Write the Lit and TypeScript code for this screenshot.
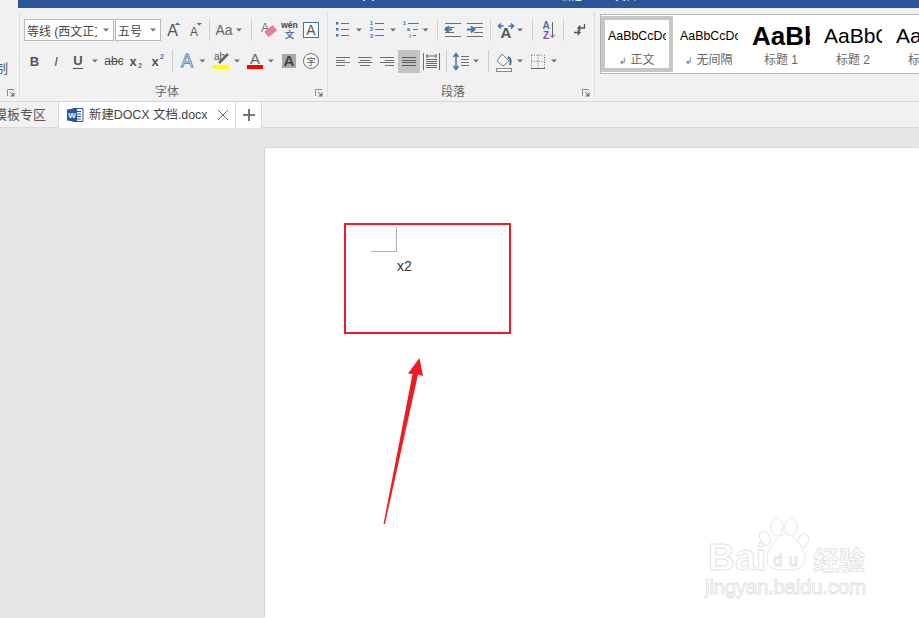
import { LitElement, html, css, svg } from "lit";
import { customElement } from "lit/decorators.js";

const SANS = `"Liberation Sans","Noto Sans CJK SC",sans-serif`;
const GR = "#555555";
const BL = "#3f74ad";

const ic = (w: number, h: number, c: unknown) =>
  html`<svg class="ic" width=${w} height=${h} viewBox="0 0 ${w} ${h}">${c}</svg>`;
const tri = (x: number, y = 11) =>
  svg`<polygon points="${x - 3},${y - 1.5} ${x + 3},${y - 1.5} ${x},${y + 1.5}" fill="#6f6f6f"/>`;
const t = (x: number, y: number, s: number, c: string, txt: string, extra = "", anchor = "middle") =>
  svg`<text x=${x} y=${y} font-size=${s} fill=${c} text-anchor=${anchor} font-weight=${extra.includes("b") ? "bold" : "normal"} font-style=${extra.includes("i") ? "italic" : "normal"} font-family=${SANS}>${txt}</text>`;
const hl = (x1: number, x2: number, y: number, c = "#6b6b6b", sw = 1) =>
  svg`<line x1=${x1} x2=${x2} y1=${y} y2=${y} stroke=${c} stroke-width=${sw}/>`;
const lines = (x: number, ws: number[], ys: number[], c = "#707070") =>
  ws.map((w, i) => hl(x, x + w, ys[i] + 0.5, c));

const launcher = html`<svg class="launch" width="8" height="8" viewBox="0 0 8 8">
  <path d="M.5 7V.5H7" fill="none" stroke="#8a8a8a"/><path d="M7.5 3v4.5H3z" fill="#777"/><path d="M3 3l3 3" stroke="#777"/>
</svg>`;

const Y = [4, 10, 16];
const fontRow1 = [
  { w: 24, c: ic(24, 22, svg`${t(11.5, 17, 16, "#555", "A")}<polygon points="13.5,6 19.5,6 16.5,3.5" fill=${BL}/>`) },
  { w: 24, c: ic(24, 22, svg`${t(9, 17, 12, "#555", "A")}<polygon points="11.5,4 17,4 14.2,6.5" fill=${BL}/>`) },
  { sep: 1 },
  { w: 41, c: ic(41, 22, svg`${t(14, 16, 14, "#666", "Aa")}${tri(29)}`) },
  { sep: 1 },
  { w: 27, c: ic(27, 22, svg`${t(13, 13, 12, "#777", "A")}<rect x="13" y="9" width="11" height="7" rx="1" fill="#e8808f" transform="rotate(-38 18 12)"/>`) },
  { w: 21, c: ic(21, 22, svg`${t(10.5, 9, 8.5, "#444", "wén", "b")}${t(10.5, 19, 9.5, BL, "文", "b")}`) },
  { w: 22, c: ic(22, 22, svg`<rect x="3.5" y="3.5" width="15" height="15" fill="#fbfbfb" stroke=${BL}/>${t(11, 16, 14, "#555", "A")}`) },
];
const fontRow2 = [
  { w: 21, c: ic(21, 23, t(10.5, 16, 13, GR, "B", "b")) },
  { w: 22, c: ic(22, 23, t(11, 16, 13, GR, "I", "i")) },
  { w: 37, c: ic(37, 23, svg`${t(11, 15, 13, GR, "U", "b")}${hl(6, 16, 18.5, GR)}${tri(28)}`) },
  { w: 20, c: ic(20, 23, svg`${t(10, 15, 12, GR, "abc")}${hl(1, 19, 11.5, GR)}`) },
  { w: 22, c: ic(22, 23, svg`${t(9, 16, 13, GR, "x", "b")}${t(16, 18, 7, BL, "2", "b")}`) },
  { w: 22, c: ic(22, 23, svg`${t(9, 16, 13, GR, "x", "b")}${t(16, 9, 7, BL, "2", "b")}`) },
  { w: 4 },
  { sep: 1 },
  { w: 37, c: ic(37, 23, svg`<text x="14" y="17" font-size="18" text-anchor="middle" font-family=${SANS} fill="#ffffff" stroke="#4a80bd" stroke-width="0.8">A</text>${tri(29.5)}`) },
  { w: 35, c: ic(35, 23, svg`${t(4, 10, 10, "#555", "ab", "", "start")}<path d="M9 13L18 4" stroke="#666" stroke-width="2.5"/><rect x="3" y="15" width="16" height="4" fill="#ffff00"/>${tri(27)}`) },
  { w: 34, c: ic(34, 23, svg`${t(10, 14, 15, "#666", "A")}<rect x="2" y="15" width="16" height="4" fill="#ff0000"/>${tri(26)}`) },
  { w: 21, c: ic(21, 23, svg`<rect x="3" y="4" width="14" height="14" fill="#a8a8a8"/>${t(10, 16, 15, "#444", "A", "b")}`) },
  { w: 22, c: ic(22, 23, svg`<circle cx="11" cy="11" r="7.5" fill="#fafafa" stroke="#707070"/>${t(11, 15, 9, "#555", "字")}`) },
];
const dots = (x: number, ys: number[]) => ys.map((y) => svg`<rect x=${x} y=${y - 1} width="2.5" height="2.5" fill=${BL}/>`);
const paraRow1 = [
  { w: 36, c: ic(36, 22, svg`${dots(8, Y)}${lines(13, [8, 8, 8], Y)}${tri(31)}`) },
  { w: 34, c: ic(34, 22, svg`${t(7.5, 6, 6, BL, "1", "b")}${t(7.5, 12, 6, BL, "2", "b")}${t(7.5, 19, 6, BL, "3", "b")}${lines(11, [9, 9, 9], Y)}${tri(29)}`) },
  { w: 33, c: ic(33, 22, svg`${t(6.5, 6, 6, BL, "1", "b")}${t(10.5, 12, 6, BL, "a", "b")}${t(12, 19, 6, BL, "i", "b")}${lines(10, [11], [4])}${lines(15, [5], [10])}${lines(15, [3], [16])}${tri(27.5)}`) },
  { w: 6 },
  { sep: 1 },
  { w: 26, c: ic(26, 22, svg`${lines(7, [16, 9, 9, 16], [4, 8, 13, 17])}<path d="M14 10.5H9M11 7.5L7.5 10.5L11 13.5" fill="none" stroke=${BL} stroke-width="2"/>`) },
  { w: 26, c: ic(26, 22, svg`${lines(3, [16], [4])}${lines(10, [9, 9], [8, 13])}${lines(3, [16], [17])}<path d="M3 10.5H9M7 7.5L10.5 10.5L7 13.5" fill="none" stroke=${BL} stroke-width="2"/>`) },
  { sep: 1 },
  { w: 41, c: ic(41, 22, svg`${t(15, 19, 15, "#555", "A", "b")}<path d="M7.5 7h5M10 4.5L7.5 7L10 9.5M17.5 7h5M20 4.5L22.5 7L20 9.5" fill="none" stroke=${BL} stroke-width="1.6"/>${tri(29)}`) },
  { sep: 1 },
  { w: 30, c: ic(30, 22, svg`${t(13, 10, 10, BL, "A", "b")}${t(13, 20, 10, "#8c4fb0", "Z", "b")}<path d="M19.5 3v15M17 15.5l2.500 3l2.500-3" fill="none" stroke="#666"/>`) },
  { sep: 1 },
  { w: 29, c: ic(29, 22, svg`<path d="M20.5 5v4h-6M16.500 6.500L14 9l2.500 2.500M10 13.500h6M13.500 11L16 13.500L13.500 16" fill="none" stroke="#555" stroke-width="1.3"/>`) },
];
const LY = [7, 10, 12, 15];
const paraRow2 = [
  { w: 26, c: ic(26, 23, lines(8, [14, 9, 14, 9], LY)) },
  { w: 22, c: ic(22, 23, svg`${lines(4, [14], [7])}${lines(6, [10], [10])}${lines(4, [14], [12])}${lines(6, [10], [15])}`) },
  { w: 22, c: ic(22, 23, svg`${lines(4, [14], [7])}${lines(9, [9], [10])}${lines(4, [14], [12])}${lines(9, [9], [15])}`) },
  { w: 22, active: 1, c: ic(22, 23, lines(4, [14, 14, 14, 14], LY, "#5c5c5c")) },
  { w: 23, c: ic(23, 23, svg`${lines(6, [11, 11, 11, 11, 11], [9, 11, 13, 15, 17], "#666")}<path d="M3.500 3v17M19.500 3v17" stroke=${BL}/><path d="M6 6h11M8 4L6 6L8 8M15 4L17 6L15 8" fill="none" stroke=${BL}/>`) },
  { w: 3 },
  { sep: 1 },
  { w: 41, c: ic(41, 23, svg`<path d="M9 4v15M6.500 7L9 3.500L11.500 7M6.500 16L9 19.500L11.500 16" fill="none" stroke=${BL} stroke-width="1.500"/>${lines(14, [8, 8, 8, 8], [6, 9, 12, 15])}${tri(29)}`) },
  { sep: 1 },
  { w: 38, c: ic(38, 23, svg`<path d="M13 4L20 11L14 16L8 11z" fill="#fafafa" stroke="#777"/><path d="M19 7q4 2 2 8" fill="none" stroke=${BL} stroke-width="2"/><rect x="7.500" y="18.500" width="15" height="3" fill="#fafafa" stroke="#8a8a8a"/>${tri(31)}`) },
  { w: 38, c: ic(38, 23, svg`<path d="M4.500 5h13v13" fill="none" stroke="#777" stroke-dasharray="1 1.500"/><path d="M4.500 5v13M11 5v13M4.500 11.500h13" fill="none" stroke="#777" stroke-dasharray="1 1.500"/>${hl(4, 18, 18.5, "#666")}${tri(27)}`) },
];

const row = (items: any[], cls: string) => html`<div class="row ${cls}">
  ${items.map((i) =>
    i.sep
      ? html`<span class="sep"></span>`
      : html`<span class="slot ${i.active ? "active" : ""}" style="width:${i.w}px">${i.c ?? ""}</span>`
  )}
</div>`;

const styles = [
  { s: "AaBbCcDc", l: "正文", mark: true, cls: "normal", sel: true },
  { s: "AaBbCcDc", l: "无间隔", mark: true, cls: "normal" },
  { s: "AaBbC", l: "标题 1", cls: "h1" },
  { s: "AaBbC", l: "标题 2", cls: "h2" },
  { s: "AaBbC", l: "标题 3", cls: "h2" },
];

@customElement("app-root")
export class AppRoot extends LitElement {
  static styles = css`
    :host { display:flex; flex-direction:column; width:919px; height:618px; overflow:hidden;
      background:#f1f1f1; font-family:"Liberation Sans","Noto Sans CJK SC",sans-serif; color:#555; }
    .title { height:8px; margin-left:18px; background:#2b579a; overflow:hidden; display:flex; flex:none; color:#fff; font-size:10.5px; line-height:16px; }
    .title .marks { margin-left:345px; width:198px; display:flex; gap:7px; flex:none; }
    .title .marks i { width:2px; height:1px; background:#c9d5e8; }
    .title .name { margin-top:-12px; white-space:nowrap; }
    .ribbon { height:94px; flex:none; display:flex; padding-top:4px; box-sizing:border-box; border-bottom:1px solid #d6d6d6; }
    .group { display:flex; flex-direction:column; position:relative; border-right:1px solid #dcdcdc; padding-top:7px; height:78px; }
    .stub { width:19px; overflow:hidden; }
    .stub .cut { margin:43px 0 0 -5px; font-size:13px; line-height:14px; color:#555; }
    .fontg { width:303px; padding-left:4px; }
    .parag { width:266px; }
    .row { display:flex; height:22px; flex:none; }
    .r2 { height:23px; margin-top:9px; }
    .slot { display:block; flex:none; height:100%; }
    .slot.active { background:#c3c3c3; }
    .ic { display:block; }
    .sep { flex:none; width:1px; height:22px; background:#cfcfcf; }
    .sel { flex:none; height:22px; box-sizing:border-box; border:1px solid #b9b9b9; background:#fff; display:flex; align-items:center; font-size:12px; color:#444; white-space:nowrap; overflow:hidden; padding-left:2px; }
    .sel.f { width:90px; margin-right:1px; }
    .sel.z { width:46px; }
    .sel span { flex:1; overflow:hidden; }
    .sel svg { flex:none; margin:0 3px 0 5px; }
    .foot { margin-top:auto; height:14px; line-height:14px; font-size:12px; text-align:center; color:#666; position:relative; }
    .foot .cap { position:relative; top:2px; }
    .fontg .foot { padding-right:17px; }
    .parag .foot { padding-right:16px; }
    .launch { position:absolute; right:4px; bottom:0; }
    .gallery { margin:2px 0 0 5px; height:60px; flex:1; box-sizing:border-box; border:1px solid #b5b5b5; border-right:0; background:#fff; display:flex; padding-top:1px; overflow:hidden; }
    .st { width:72px; height:56px; flex:none; box-sizing:border-box; border:4px solid transparent; }
    .st.on { border-color:#c6c6c6; }
    .st .s { width:58px; margin-left:3px; height:32px; line-height:32px; overflow:hidden; white-space:nowrap; color:#000; }
    .s.normal { font-size:12.4px; }
    .s.h1 { font-size:26px; font-weight:bold; }
    .s.h2 { font-size:21px; }
    .st .l { height:16px; line-height:16px; font-size:12px; color:#666; text-align:center; }
    .l small { font-size:9px; margin-right:3px; }
    .tabs { height:26px; flex:none; display:flex; box-sizing:border-box; border-bottom:1px solid #d9d9d9; }
    .tab { height:26px; box-sizing:border-box; font-size:13px; line-height:25px; color:#555; white-space:nowrap; overflow:hidden; flex:none; }
    .tab.old { width:59px; border-right:1px solid #d9d9d9; display:flex; justify-content:flex-end; padding-right:12px; }
    .tab.cur { width:177px; background:#fff; border-right:1px solid #d9d9d9; display:flex; align-items:center; padding-left:8px; color:#444; }
    .tab.cur .nm { margin-left:5px; font-size:12.4px; width:128px; }
    .tab.add { width:26px; background:#fff; border-right:1px solid #d9d9d9; display:flex; align-items:center; justify-content:center; }
    .doc { flex:1; background:#e6e6e6; padding:20px 0 0 265px; display:flex; min-height:0; }
    .page { flex:1; background:#fff; position:relative; box-sizing:border-box; padding:79px 0 0 106px; box-shadow:-1px -1px 0 #d4d4d4; }
    .corner { width:25px; height:24px; border-right:1px solid #b0b0b0; border-bottom:1px solid #b0b0b0; }
    .body { margin:5px 0 0 26px; font-size:14px; line-height:18px; color:#333; }
    .redbox { position:absolute; left:79px; top:75px; width:167px; height:111px; box-sizing:border-box; border:2px solid #ed1c24; }
    .over { position:absolute; left:-265px; top:-148px; pointer-events:none; }
  `;

  render() {
    return html`
      <div class="title"><div class="marks"><i></i><i></i></div><div class="name">新建DOCX 文档.docx - Word</div></div>
      <div class="ribbon">
        <div class="group stub"><div class="cut">制</div><div class="foot">${launcher}</div></div>
        <div class="group fontg">
          <div class="row">
            <div class="sel f"><span>等线 (西文正文)</span><svg width="8" height="6"><polygon points="1,1.500 7,1.500 4,4.500" fill="#6f6f6f"/></svg></div>
            <div class="sel z"><span>五号</span><svg width="8" height="6"><polygon points="1,1.500 7,1.500 4,4.500" fill="#6f6f6f"/></svg></div>
            ${fontRow1.map((i: any) => i.sep ? html`<span class="sep"></span>` : html`<span class="slot" style="width:${i.w}px">${i.c}</span>`)}
          </div>
          ${row(fontRow2, "r2")}
          <div class="foot"><span class="cap">字体</span>${launcher}</div>
        </div>
        <div class="group parag">
          ${row(paraRow1, "")}
          ${row(paraRow2, "r2")}
          <div class="foot"><span class="cap">段落</span>${launcher}</div>
        </div>
        <div class="gallery">
          ${styles.map((s) => html`<div class="st ${s.sel ? "on" : ""}">
            <div class="s ${s.cls}">${s.s}</div>
            <div class="l">${s.mark ? html`<small>↲</small>` : ""}${s.l}</div>
          </div>`)}
        </div>
      </div>
      <div class="tabs">
        <div class="tab old">模板专区</div>
        <div class="tab cur">
          <svg width="17" height="16" viewBox="0 0 17 16"><path d="M6 1.500h10v13H6z" fill="#fff" stroke="#2b579a"/><path d="M9 4.500h5M9 7h5M9 9.500h5M9 12h5" stroke="#2b579a"/><path d="M0 2.500L10 1v14L0 13.500z" fill="#2b579a"/><text x="5" y="10.500" font-size="8" font-weight="bold" fill="#fff" text-anchor="middle" font-family=${SANS}>W</text></svg>
          <span class="nm">新建DOCX 文档.docx</span>
          <svg width="12" height="12" viewBox="0 0 12 12"><path d="M1 1l10 10M11 1L1 11" stroke="#666" stroke-width="1"/></svg>
        </div>
        <div class="tab add"><svg width="12" height="12" viewBox="0 0 12 12"><path d="M6 0v12M0 6h12" stroke="#777" stroke-width="2"/></svg></div>
      </div>
      <div class="doc">
        <div class="page">
          <div class="corner"></div>
          <div class="body">x2</div>
          <div class="redbox"></div>
          <svg class="over" width="919" height="618" viewBox="0 0 919 618">
            <polygon points="383.500,524 412.500,374 408,373.500 419.500,358 423,376 418,374.500 385,524" fill="#ed1c24"/>
            <g fill="#fff" stroke="#e2e2e2" stroke-width="0.9">
              <text x="708" y="570" font-size="37" font-weight="bold" font-family=${SANS} textLength="58">Bai</text>
              <ellipse cx="765" cy="538" rx="5" ry="7.500" transform="rotate(-25 765 538)"/>
              <ellipse cx="777" cy="527" rx="6" ry="9"/>
              <ellipse cx="791" cy="527" rx="6" ry="9"/>
              <ellipse cx="803" cy="541" rx="5" ry="7.500" transform="rotate(25 803 541)"/>
              <path d="M786 534c8 0 19 14 19 25c0 10-9 11-19 11s-19-1-19-11c0-11 11-25 19-25z"/>
              <text x="773" y="566" font-size="17" font-family=${SANS} textLength="25">du</text>
              <text x="813" y="570" font-size="26" font-weight="bold" font-family=${SANS}>经验</text>
              <text x="705" y="594" font-size="20.500" font-family=${SANS} textLength="161">jingyan.baidu.com</text>
            </g>
          </svg>
        </div>
      </div>
    `;
  }
}
